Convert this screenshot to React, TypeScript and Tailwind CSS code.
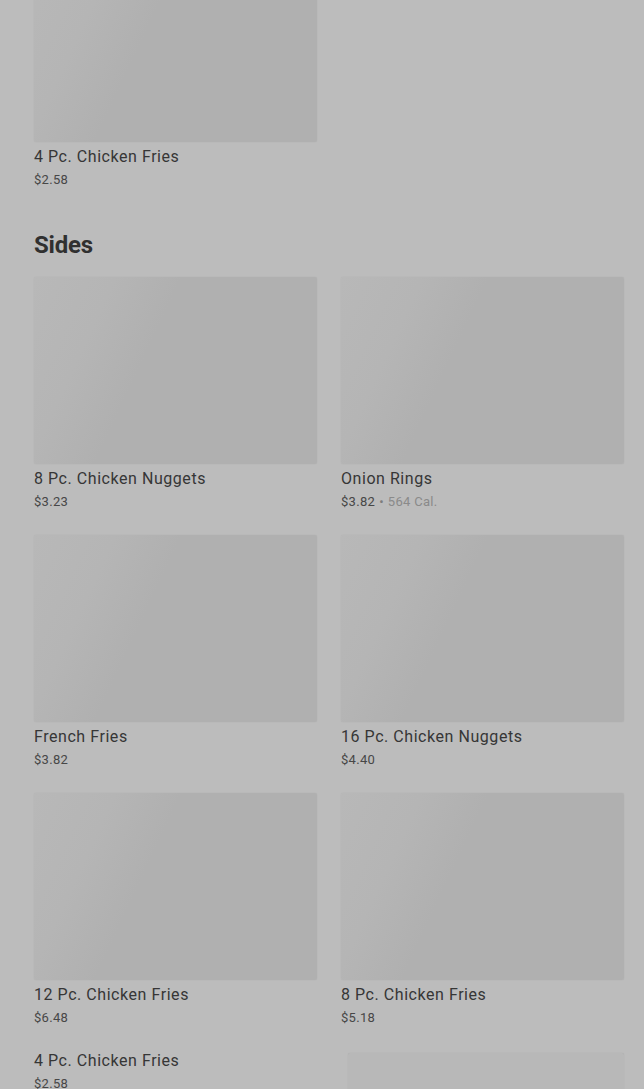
type Item = { name: string; price: string; cal?: string };

const sides: Item[] = [
  { name: "8 Pc. Chicken Nuggets", price: "$3.23" },
  { name: "Onion Rings", price: "$3.82", cal: "564 Cal." },
  { name: "French Fries", price: "$3.82" },
  { name: "16 Pc. Chicken Nuggets", price: "$4.40" },
  { name: "12 Pc. Chicken Fries", price: "$6.48" },
  { name: "8 Pc. Chicken Fries", price: "$5.18" },
];

const Placeholder = ({ className = "" }: { className?: string }) => (
  <div
    className={`h-[187px] w-full rounded-[2px] bg-[linear-gradient(115deg,#b8b8b8_0%,#b5b5b5_22%,#b0b0b0_40%,#b0b0b0_100%)] shadow-[0_0_1px_rgba(0,0,0,0.12)] ${className}`}
  />
);

const Meta = ({ item }: { item: Item }) => (
  <div>
    <p className="mt-[5px] text-[16px] leading-[20px] tracking-[0.55px] text-[#363636]">{item.name}</p>
    <p className="mt-[4px] text-[13px] leading-[17px] tracking-[0.3px] text-[#474747]">
      {item.price}
      {item.cal && (
        <>
          <span className="mx-[4px] text-[#7d7d7d]">•</span>
          <span className="text-[#8a8a8a]">{item.cal}</span>
        </>
      )}
    </p>
  </div>
);

const Card = ({ item }: { item: Item }) => (
  <div>
    <Placeholder />
    <Meta item={item} />
  </div>
);

export default function App() {
  return (
    <div
      className="min-h-[1089px] w-full overflow-hidden bg-[#bcbcbc] pl-[34px] pr-[20px]"
      style={{ fontFamily: "Roboto, 'Noto Sans', sans-serif" }}
    >
      {/* previous section tail */}
      <div className="-mt-[45px] w-[283px]">
        <Card item={{ name: "4 Pc. Chicken Fries", price: "$2.58" }} />
      </div>

      <h2 className="mt-[41px] text-[24px] font-bold leading-[32px] tracking-[-0.2px] text-[#303030]">Sides</h2>

      <div className="mt-[16px] grid grid-cols-2 gap-x-[24px] gap-y-[25px]">
        {sides.map((s) => (
          <Card key={s.name} item={s} />
        ))}
        <div className="-mt-[5px]">
          <Meta item={{ name: "4 Pc. Chicken Fries", price: "$2.58" }} />
        </div>
        <div className="pl-[7px] pt-[2px]">
          <Placeholder className="bg-[#b8b8b8] bg-none" />
        </div>
      </div>
    </div>
  );
}
